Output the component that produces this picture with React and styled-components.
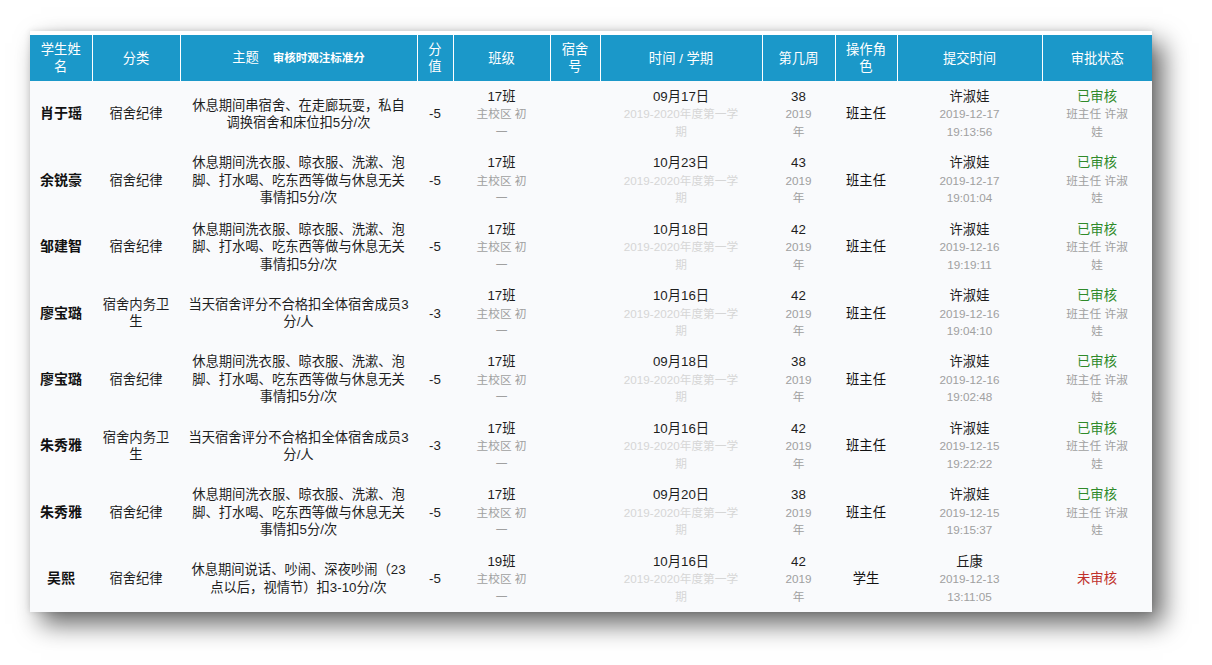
import React from "react";
import styled, { createGlobalStyle } from "styled-components";

const Global = createGlobalStyle`
  html, body { margin: 0; padding: 0; background: #ffffff; }
  body { font-family: "Liberation Sans", "Noto Sans CJK SC", sans-serif; }
`;

const Page = styled.div`
  padding: 31px 0 0 30px;
  width: 1212px;
  height: 665px;
  box-sizing: border-box;
  overflow: hidden;
`;

const Card = styled.div`
  width: 1122px;
  padding-top: 4px;
  background: #ffffff;
  box-shadow: 11px 12px 24px rgba(0, 0, 0, 0.6), 0 0 6px rgba(0, 0, 0, 0.12);
`;

const Table = styled.table`
  width: 1122px;
  table-layout: fixed;
  border-collapse: collapse;
  background: #f9fafc;
`;

const Th = styled.th`
  height: 46px;
  padding: 0 8px;
  background: #1b98c9;
  color: #ffffff;
  font-weight: normal;
  font-size: 13.3px;
  line-height: 17px;
  text-align: center;
  vertical-align: middle;
  border-right: 1px solid #ffffff;
  &:last-child { border-right: none; }
`;

const HeadNote = styled.span`
  margin-left: 14px;
  font-size: 11.5px;
  font-weight: bold;
`;

const Row = styled.tr`
  height: 66.375px;
`;

const Td = styled.td`
  padding: 0 ${(p) => p.$pad ?? 8}px;
  text-align: center;
  vertical-align: middle;
  font-size: 13.3px;
  line-height: 17.5px;
  color: #333333;
`;

const Name = styled.span`
  font-size: 14px;
  font-weight: bold;
  color: #111111;
`;

const Main = styled.div`
  color: ${(p) => p.$color || "#1e1e1e"};
  font-size: 13.3px;
`;

const Sub = styled.div`
  font-size: 11.7px;
  line-height: 17.5px;
  color: ${(p) => (p.$faint ? "#d6d6d6" : "#a0a0a0")};
`;

const cols = [62, 88, 237, 36, 97, 50, 162, 73, 62, 145, 110];

const WASH =
  "休息期间洗衣服、晾衣服、洗漱、泡脚、打水喝、吃东西等做与休息无关事情扣5分/次";
const CLEAN = "当天宿舍评分不合格扣全体宿舍成员3分/人";

const rows = [
  { name: "肖于瑶", cat: "宿舍纪律", topic: "休息期间串宿舍、在走廊玩耍，私自调换宿舍和床位扣5分/次", score: "-5", cls: "17班", date: "09月17日", week: "38", role: "班主任", by: "许淑娃", time: "2019-12-17 19:13:56", ok: true },
  { name: "余锐豪", cat: "宿舍纪律", topic: WASH, score: "-5", cls: "17班", date: "10月23日", week: "43", role: "班主任", by: "许淑娃", time: "2019-12-17 19:01:04", ok: true },
  { name: "邹建智", cat: "宿舍纪律", topic: WASH, score: "-5", cls: "17班", date: "10月18日", week: "42", role: "班主任", by: "许淑娃", time: "2019-12-16 19:19:11", ok: true },
  { name: "廖宝璐", cat: "宿舍内务卫生", topic: CLEAN, score: "-3", cls: "17班", date: "10月16日", week: "42", role: "班主任", by: "许淑娃", time: "2019-12-16 19:04:10", ok: true },
  { name: "廖宝璐", cat: "宿舍纪律", topic: WASH, score: "-5", cls: "17班", date: "09月18日", week: "38", role: "班主任", by: "许淑娃", time: "2019-12-16 19:02:48", ok: true },
  { name: "朱秀雅", cat: "宿舍内务卫生", topic: CLEAN, score: "-3", cls: "17班", date: "10月16日", week: "42", role: "班主任", by: "许淑娃", time: "2019-12-15 19:22:22", ok: true },
  { name: "朱秀雅", cat: "宿舍纪律", topic: WASH, score: "-5", cls: "17班", date: "09月20日", week: "38", role: "班主任", by: "许淑娃", time: "2019-12-15 19:15:37", ok: true },
  { name: "吴熙", cat: "宿舍纪律", topic: "休息期间说话、吵闹、深夜吵闹（23点以后，视情节）扣3-10分/次", score: "-5", cls: "19班", date: "10月16日", week: "42", role: "学生", by: "丘康", time: "2019-12-13 13:11:05", ok: false },
];

export default function App() {
  return (
    <>
      <Global />
      <Page>
        <Card>
          <Table>
            <colgroup>
              {cols.map((w, i) => (
                <col key={i} style={{ width: w }} />
              ))}
            </colgroup>
            <thead>
              <tr>
                <Th>学生姓名</Th>
                <Th>分类</Th>
                <Th>
                  主题<HeadNote>审核时观注标准分</HeadNote>
                </Th>
                <Th>分值</Th>
                <Th>班级</Th>
                <Th>宿舍号</Th>
                <Th>时间 / 学期</Th>
                <Th>第几周</Th>
                <Th>操作角色</Th>
                <Th>提交时间</Th>
                <Th>审批状态</Th>
              </tr>
            </thead>
            <tbody>
              {rows.map((r, i) => (
                <Row key={i}>
                  <Td $pad={4}>
                    <Name>{r.name}</Name>
                  </Td>
                  <Td>
                    <Main>{r.cat}</Main>
                  </Td>
                  <Td $pad={6}>
                    <Main>{r.topic}</Main>
                  </Td>
                  <Td $pad={2}>
                    <Main>{r.score}</Main>
                  </Td>
                  <Td $pad={20}>
                    <Main>{r.cls}</Main>
                    <Sub>主校区 初一</Sub>
                  </Td>
                  <Td />
                  <Td $pad={20}>
                    <Main>{r.date}</Main>
                    <Sub $faint>2019-2020年度第一学期</Sub>
                  </Td>
                  <Td $pad={20}>
                    <Main>{r.week}</Main>
                    <Sub>2019 年</Sub>
                  </Td>
                  <Td $pad={4}>
                    <Main $color="#111111">{r.role}</Main>
                  </Td>
                  <Td $pad={20}>
                    <Main>{r.by}</Main>
                    <Sub>{r.time}</Sub>
                  </Td>
                  <Td $pad={20}>
                    <Main $color={r.ok ? "#2f8a2a" : "#c0302b"}>
                      {r.ok ? "已审核" : "未审核"}
                    </Main>
                    {r.ok && <Sub>班主任 许淑娃</Sub>}
                  </Td>
                </Row>
              ))}
            </tbody>
          </Table>
        </Card>
      </Page>
    </>
  );
}
